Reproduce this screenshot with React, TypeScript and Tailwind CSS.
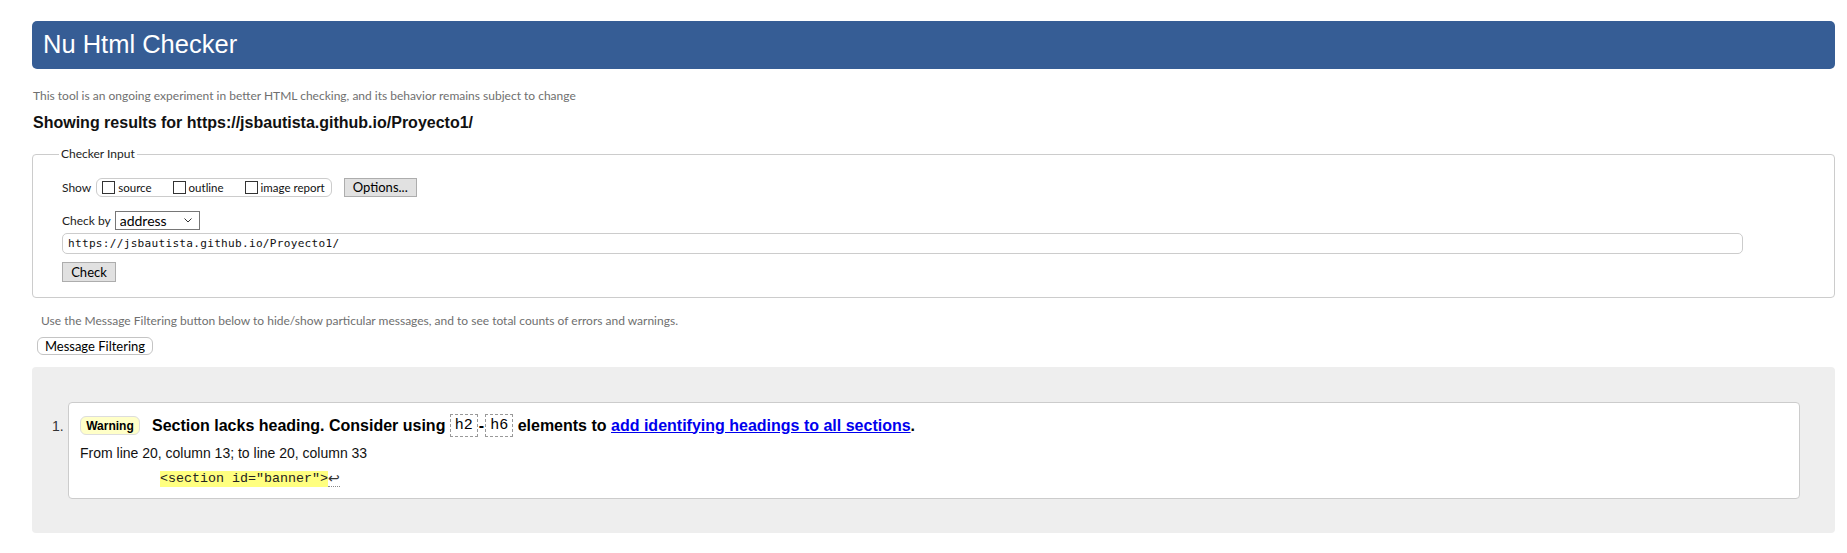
import { useState } from 'react';

const segoe = "font-['Lato','Noto_Sans',sans-serif]";

const ShowOption = ({ label }: { label: string }) => {
  const [checked, setChecked] = useState(false);
  return (
    <label className="flex items-center gap-[3px] cursor-pointer">
      <span
        onClick={() => setChecked(!checked)}
        className={`w-[13px] h-[13px] border border-[#333] bg-white ${checked ? 'bg-[#0075ff]' : ''}`}
      />
      <span className="text-[11.5px] text-[#111] leading-none">{label}</span>
    </label>
  );
};

const Code = ({ children }: { children: string }) => (
  <code className="inline-block border border-dashed border-[#999] px-[4px] h-[23px] leading-[21px] align-middle font-['Liberation_Mono',monospace] text-[15px] font-normal">
    {children}
  </code>
);

const App = () => {
  const [url, setUrl] = useState('https://jsbautista.github.io/Proyecto1/');
  const [checkBy, setCheckBy] = useState('address');

  return (
    <div className="min-h-screen bg-white pl-[32px] pr-[12px] pt-[21px] pb-[20px] font-['Liberation_Sans',Arial,sans-serif] text-black">
      {/* Title bar */}
      <header className="h-[48px] bg-[#365d95] rounded-[5px] flex items-center pl-[11px]">
        <h1 className="text-[25.5px] leading-none text-white font-normal">Nu Html Checker</h1>
      </header>

      <p className={`${segoe} mt-[19px] pl-[1px] text-[12px] leading-[16px] text-[#6f6f6f]`}>
        This tool is an ongoing experiment in better HTML checking, and its behavior remains subject to change
      </p>

      <h2 className="mt-[9px] pl-[1px] text-[16px] leading-[20px] font-bold text-[#111]">
        Showing results for https://jsbautista.github.io/Proyecto1/
      </h2>

      {/* Checker input */}
      <fieldset className={`${segoe} mt-[13px] border border-[#cccccc] rounded-[4px] pl-[29px] pr-[29px] pt-[16px] pb-[15px]`}>
        <legend className="-ml-[3px] px-[2px] text-[12px] leading-[16px] text-[#222]">Checker Input</legend>

        <div className="flex items-center h-[19px]">
          <span className="text-[12px] text-[#222] mr-[5px]">Show</span>
          <div className="h-[19px] flex items-center gap-[21px] border border-[#cccccc] rounded-[6px] pl-[5px] pr-[6px]">
            <ShowOption label="source" />
            <ShowOption label="outline" />
            <ShowOption label="image report" />
          </div>
          <button className="ml-[12px] h-[19px] w-[73px] bg-[#e1e1e1] border border-[#adadad] text-[13px] leading-none text-black">
            Options...
          </button>
        </div>

        <div className="flex items-center mt-[14px] h-[19px]">
          <span className="text-[12px] text-[#222] mr-[4px]">Check by</span>
          <div className="relative h-[19px] w-[85px] border border-[#767676] bg-white flex items-center">
            <select
              value={checkBy}
              onChange={(e) => setCheckBy(e.target.value)}
              className="appearance-none w-full h-full pl-[4px] text-[14px] leading-none bg-transparent outline-none"
            >
              <option value="address">address</option>
              <option value="file">file upload</option>
              <option value="text">text input</option>
            </select>
            <svg className="absolute right-[7px] top-[6px] pointer-events-none" width="8" height="5" viewBox="0 0 8 5">
              <path d="M0.5 0.5 L4 4 L7.5 0.5" fill="none" stroke="#333" strokeWidth="1" />
            </svg>
          </div>
        </div>

        <input
          value={url}
          onChange={(e) => setUrl(e.target.value)}
          className="mt-[3px] block w-[1681px] h-[21px] border border-[#cccccc] rounded-[5px] pl-[5px] font-['DejaVu_Sans_Mono',monospace] text-[11.1px] tracking-[0.28px] text-[#111] outline-none"
        />

        <button className="mt-[8px] block w-[54px] h-[20px] bg-[#e1e1e1] border border-[#adadad] text-[13px] leading-none text-black">
          Check
        </button>
      </fieldset>

      <p className={`${segoe} mt-[15px] pl-[9px] text-[12px] leading-[16px] text-[#6f6f6f]`}>
        Use the Message Filtering button below to hide/show particular messages, and to see total counts of errors and warnings.
      </p>

      <div className="mt-[8px] pl-[5px] flex">
        <button className={`${segoe} h-[18px] w-[116px] border border-[#c4c4c4] rounded-[6px] bg-white text-[13px] leading-none text-black`}>
          Message Filtering
        </button>
      </div>

      {/* Results */}
      <div className="mt-[12px] bg-[#eeeeee] rounded-[4px] pt-[35px] pb-[34px] pl-[20px] pr-[35px]">
        <ol className="flex">
          <span className="w-[10px] mt-[16px] text-[14px] leading-[16px] text-[#333]">1.</span>
          <li className="ml-[6px] flex-1 bg-white border border-[#cccccc] rounded-[4px] pl-[11px] pt-[11px] pb-[11px]">
            <p className="flex items-center h-[23px] text-[16px] font-bold text-black whitespace-nowrap">
              <span className="inline-flex items-center justify-center w-[60px] h-[19px] bg-[#ffffc8] border border-[#dddddd] rounded-[6px] text-[12px] font-bold mr-[12px]">
                Warning
              </span>
              <span>Section lacks heading. Consider using&nbsp;</span>
              <Code>h2</Code>
              <span className="mx-[1px]">-</span>
              <Code>h6</Code>
              <span>&nbsp;elements to&nbsp;</span>
              <a href="#" className="text-[#0000ee] underline">add identifying headings to all sections</a>
              <span>.</span>
            </p>
            <p className="mt-[8px] text-[14px] leading-[16px] text-[#111]">
              From line 20, column 13; to line 20, column 33
            </p>
            <p className="mt-[10px] pl-[80px] flex items-end h-[16px]">
              <code className="bg-[#ffff80] h-[16px] leading-[16px] font-['Liberation_Mono',monospace] text-[13.33px] text-[#222]">
                &lt;section id="banner"&gt;
              </code>
              <span className="h-[16px] leading-[14px] border-b border-dotted border-[#888] text-[14px] text-[#333]">↩</span>
            </p>
          </li>
        </ol>
      </div>
    </div>
  );
};

export default App;
